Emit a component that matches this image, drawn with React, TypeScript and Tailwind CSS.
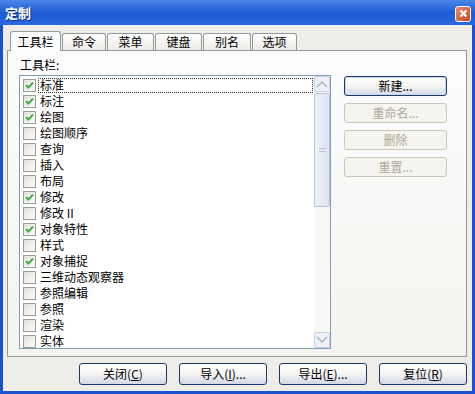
import React from "react";

const font = { fontFamily: '"Noto Sans CJK SC", "Noto Sans", sans-serif' };

const items: [string, boolean][] = [
  ["标准", true],
  ["标注", true],
  ["绘图", true],
  ["绘图顺序", false],
  ["查询", false],
  ["插入", false],
  ["布局", false],
  ["修改", true],
  ["修改 II", false],
  ["对象特性", true],
  ["样式", false],
  ["对象捕捉", true],
  ["三维动态观察器", false],
  ["参照编辑", false],
  ["参照", false],
  ["渲染", false],
  ["实体", false],
];

function CheckBox({ checked }: { checked: boolean }) {
  return (
    <div className="w-[13px] h-[13px] shrink-0 border border-[#9c9c94] bg-gradient-to-br from-[#e2e2dc] to-[#fbfbf9] flex items-center justify-center">
      {checked && (
        <svg width="9" height="9" viewBox="0 0 9 9">
          <path d="M1 4.2 L3.3 6.6 L8 1.6" fill="none" stroke="#3fa83a" strokeWidth="2" />
        </svg>
      )}
    </div>
  );
}

function Tab({ label, active, w }: { label: string; active?: boolean; w: string }) {
  if (active) {
    return (
      <div
        className={`${w} h-[20px] -mb-[1px] z-10 border border-b-0 border-[#919b9c] rounded-t-[3px] bg-[#fcfcfe] flex items-center justify-center text-[12px] text-black`}
      >
        {label}
      </div>
    );
  }
  return (
    <div
      className={`${w} h-[17px] border border-b-0 border-[#919b9c] rounded-t-[3px] bg-gradient-to-b from-white to-[#ecebe6] flex items-center justify-center text-[12px] text-black`}
    >
      {label}
    </div>
  );
}

function SideButton({ children, disabled, def }: { children: React.ReactNode; disabled?: boolean; def?: boolean }) {
  if (disabled) {
    return (
      <div className="w-[103px] h-[20px] rounded-[3px] border border-[#c9c7ba] bg-[#f5f4ee] flex items-center justify-center text-[12px] text-[#aca899]">
        {children}
      </div>
    );
  }
  return (
    <div
      className={`w-[103px] h-[20px] rounded-[3px] border border-[#1e3a6a] bg-gradient-to-b from-white via-[#f4f4f2] to-[#d6dbe8] flex items-center justify-center text-[12px] text-black ${def ? "shadow-[inset_0_0_0_1px_#c8d6f2]" : ""}`}
    >
      {children}
    </div>
  );
}

function BottomButton({ children }: { children: React.ReactNode }) {
  return (
    <div className="w-[88px] h-[22px] rounded-[3px] border border-[#1e3a6a] bg-gradient-to-b from-white via-[#f4f4f2] to-[#d3d8e6] flex items-center justify-center text-[12px] text-black">
      {children}
    </div>
  );
}

function Chevron({ up }: { up?: boolean }) {
  return (
    <svg width="12" height="8" viewBox="0 0 12 8">
      <path
        d={up ? "M1 7 L6 2 L11 7" : "M1 1 L6 6 L11 1"}
        fill="none"
        stroke="#a9b1c2"
        strokeWidth="1.3"
      />
    </svg>
  );
}

export default function App() {
  return (
    <div className="w-[475px] h-[394px] flex flex-col bg-[#1a52d0] overflow-hidden" style={font}>
      {/* Title bar */}
      <div className="h-[25px] shrink-0 flex items-center justify-between pl-[5px] pr-[4px] bg-gradient-to-b from-[#4a86e8] via-[#1d5bd6] to-[#2a69de]">
        <span className="text-white text-[13px] font-bold leading-none [text-shadow:1px_1px_0_#0a2a80]">定制</span>
        <div className="w-[16px] h-[16px] mt-[2px] rounded-[3px] border border-white bg-gradient-to-br from-[#e98a70] to-[#c2452a] flex items-center justify-center">
          <svg width="9" height="9" viewBox="0 0 9 9">
            <path d="M1.5 1.5 L7.5 7.5 M7.5 1.5 L1.5 7.5" stroke="white" strokeWidth="2" />
          </svg>
        </div>
      </div>

      {/* Body */}
      <div className="flex-1 mx-[3px] mb-[3px] bg-[#eeede7] flex flex-col pt-[6px] px-[4px]">
        {/* Tabs */}
        <div className="flex items-end gap-[1px] pl-[3px] h-[19px]">
          <Tab label="工具栏" active w="w-[51px]" />
          <Tab label="命令" w="w-[44px]" />
          <Tab label="菜单" w="w-[47px]" />
          <Tab label="键盘" w="w-[47px]" />
          <Tab label="别名" w="w-[48px]" />
          <Tab label="选项" w="w-[45px]" />
        </div>

        {/* Panel */}
        <div className="w-[460px] h-[307px] border border-[#919b9c] bg-gradient-to-b from-[#fcfcfe] to-[#f4f3ee] pl-[11px] pt-[6px] flex flex-col">
          <div className="h-[16px] leading-[16px] text-[12px] text-black ml-[1px]">工具栏:</div>
          <div className="mt-[2px] flex">
            {/* Listbox */}
            <div className="w-[312px] h-[274px] border border-[#7f9db9] bg-white flex">
              <div className="flex-1 pt-[1px] overflow-hidden">
                {items.map(([name, checked], i) => (
                  <div key={name} className="h-[16px] flex items-center pl-[3px]">
                    <CheckBox checked={checked} />
                    <div
                      className={`flex-1 ml-[2px] mr-[1px] h-[15px] flex items-center pl-[1px] text-[12px] leading-none text-black border border-dotted ${
                        i === 0 ? "border-[#333]" : "border-transparent"
                      }`}
                    >
                      {name}
                    </div>
                  </div>
                ))}
              </div>
              {/* Scrollbar */}
              <div className="w-[16px] h-full bg-[#f7f7f4] flex flex-col">
                <div className="h-[16px] rounded-[2px] border border-[#c8d0e2] bg-[#eef1f8] flex items-center justify-center">
                  <Chevron up />
                </div>
                <div className="mt-[1px] h-[114px] rounded-[2px] border border-[#b9c3d8] bg-gradient-to-r from-[#eef1f8] to-[#dde3ef] flex flex-col items-center justify-center gap-[2px]">
                  <div className="w-[7px] h-[1px] bg-[#b7c0d4]" />
                  <div className="w-[7px] h-[1px] bg-[#b7c0d4]" />
                </div>
                <div className="flex-1" />
                <div className="h-[16px] rounded-[2px] border border-[#c8d0e2] bg-[#eef1f8] flex items-center justify-center">
                  <Chevron />
                </div>
              </div>
            </div>

            {/* Right buttons */}
            <div className="ml-[13px] mt-[1px] flex flex-col gap-[7px]">
              <SideButton def>新建...</SideButton>
              <SideButton disabled>重命名...</SideButton>
              <SideButton disabled>删除</SideButton>
              <SideButton disabled>重置...</SideButton>
            </div>
          </div>
        </div>

        {/* Bottom buttons */}
        <div className="mt-[6px] flex justify-end gap-[12px] pr-[1px]">
          <BottomButton>
            关闭(<span className="underline">C</span>)
          </BottomButton>
          <BottomButton>
            导入(<span className="underline">I</span>)...
          </BottomButton>
          <BottomButton>
            导出(<span className="underline">E</span>)...
          </BottomButton>
          <BottomButton>
            复位(<span className="underline">R</span>)
          </BottomButton>
        </div>
      </div>
    </div>
  );
}
